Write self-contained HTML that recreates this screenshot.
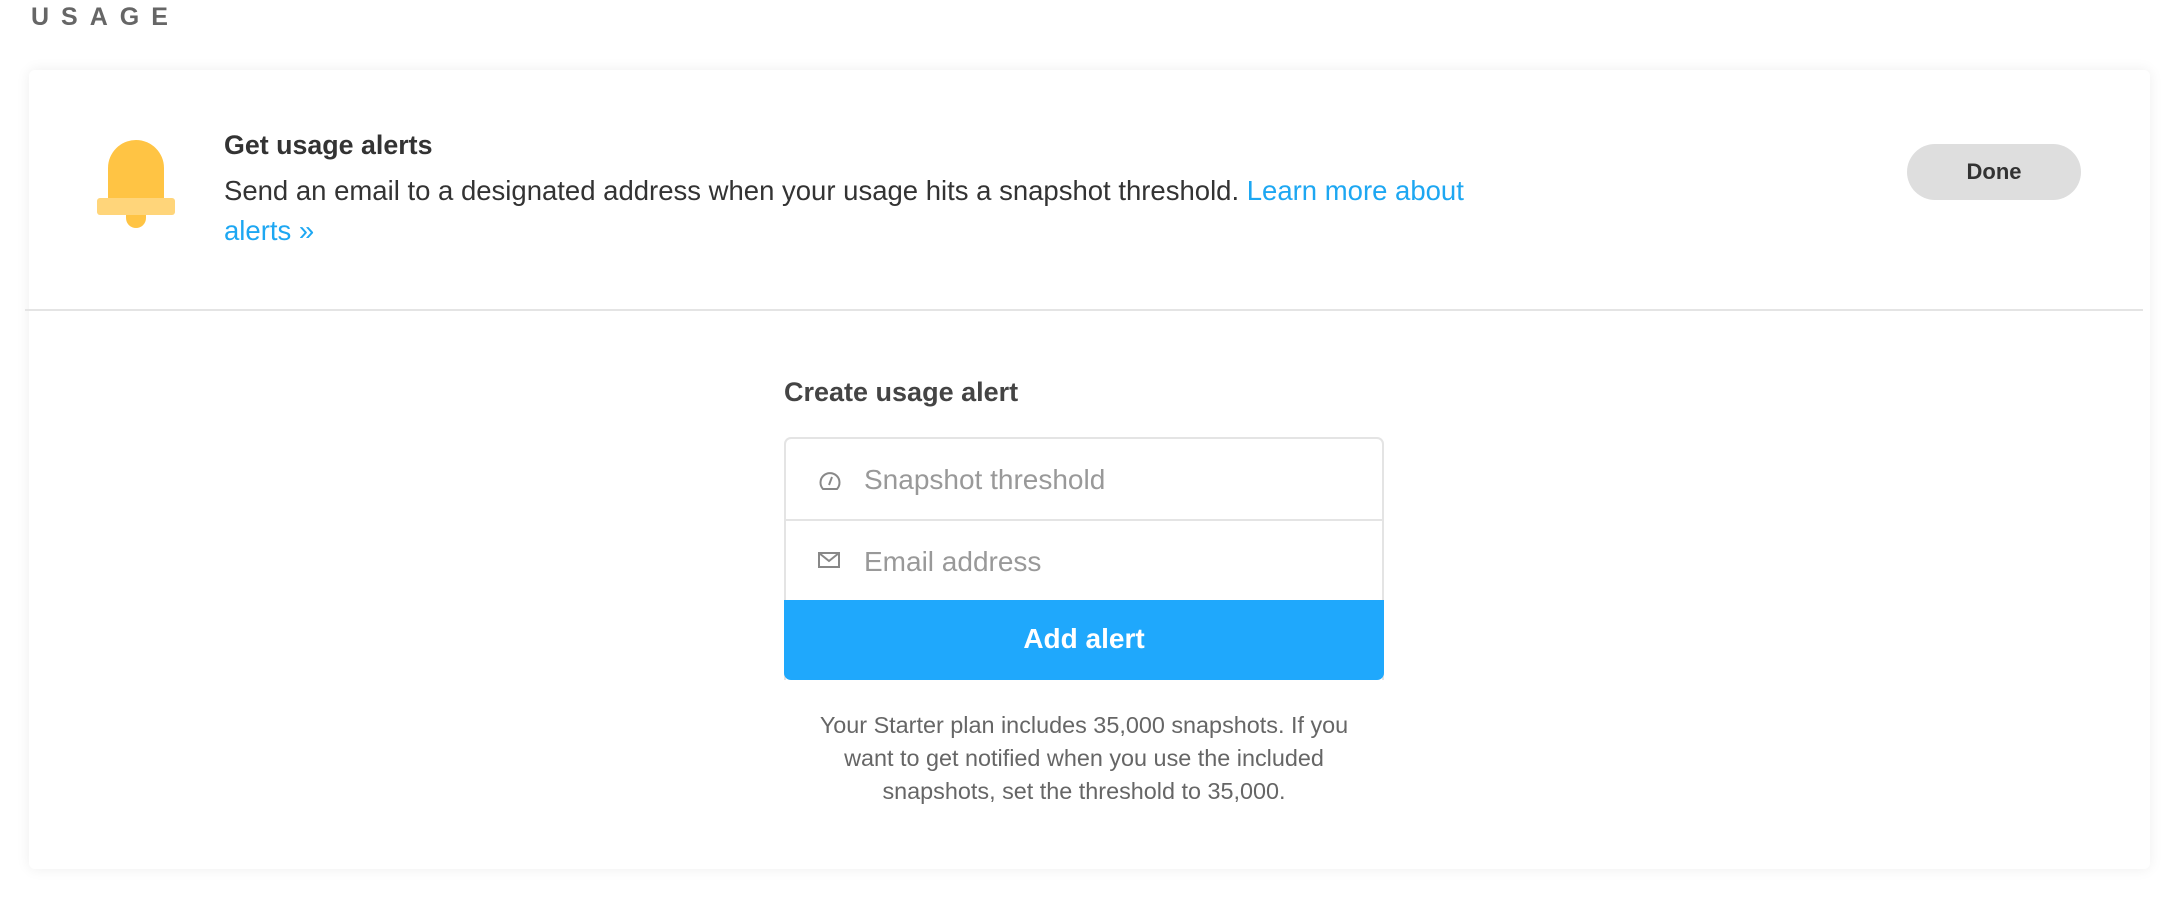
<!DOCTYPE html>
<html><head><meta charset="utf-8"><style>
*{margin:0;padding:0;box-sizing:border-box}
body{width:2180px;height:898px;background:#fff;font-family:"Liberation Sans",sans-serif;position:relative;overflow:hidden;color:#333}
.usage{position:absolute;left:31px;top:3px;font-size:25px;font-weight:bold;letter-spacing:12px;color:#666}
.card{position:absolute;left:29px;top:70px;width:2121px;height:799px;background:#fff;border-radius:6px;box-shadow:0 0 14px rgba(0,0,0,0.07)}
.div{position:absolute;left:25px;top:309px;width:2118px;height:2px;background:#e4e4e4}
.bell{position:absolute}
.t1{position:absolute;left:224px;top:130px;font-size:26.8px;font-weight:bold;color:#333}
.t2{position:absolute;left:224px;top:171px;width:1275px;font-size:27.5px;line-height:40px;color:#333}
.t2 a{color:#1da7f2;text-decoration:none}
.done{position:absolute;left:1907px;top:144px;width:174px;height:56px;border-radius:28px;background:#dedede;font-size:22px;font-weight:bold;color:#333;text-align:center;line-height:56px}
.h{position:absolute;left:784px;top:377px;font-size:27px;font-weight:bold;color:#444}
.box{position:absolute;left:784px;top:437px;width:600px;height:243px;border:2px solid #e4e4e4;border-bottom:none;border-radius:7px 7px 0 0}
.row{position:absolute;left:0;width:100%;height:82px;font-size:28px;color:#999;line-height:82px;padding-left:78px}
.row svg{position:absolute;left:32px;top:30px}
.btn{position:absolute;left:784px;top:600px;width:600px;height:80px;background:#1fa8fc;color:#fff;font-size:28px;font-weight:bold;text-align:center;line-height:78px;border-radius:0 0 7px 7px}
.note{position:absolute;left:794px;top:709px;width:580px;text-align:center;font-size:23.4px;line-height:33px;color:#666}
</style></head><body>
<div class="usage">USAGE</div>
<div class="card"></div>
<svg class="bell" style="left:97px;top:140px" width="78" height="88" viewBox="0 0 78 88">
<path d="M11 60 V28 A28 28 0 0 1 67 28 V60 Z" fill="#ffc444"/>
<rect x="0" y="58" width="78" height="17" rx="3" fill="#ffd57a"/>
<path d="M29 75 h20 v3 a10 10 0 0 1 -20 0 z" fill="#ffc444"/>
</svg>
<div class="t1">Get usage alerts</div>
<div class="t2">Send an email to a designated address when your usage hits a snapshot threshold. <a>Learn more about alerts »</a></div>
<div class="done">Done</div>
<div class="div"></div>
<div class="h">Create usage alert</div>
<div class="box">
<div class="row" style="top:0"><svg width="24" height="22" viewBox="0 0 24 22" fill="none" stroke="#888" stroke-width="2"><path d="M5 20 A9.5 9.5 0 1 1 19 20 Z"/><path d="M11 16 L14 8"/></svg>Snapshot threshold</div>
<div style="position:absolute;left:0;top:80px;width:100%;height:2px;background:#e4e4e4"></div>
<div class="row" style="top:82px"><svg width="22" height="18" viewBox="0 0 22 18" fill="none" stroke="#888" stroke-width="2"><rect x="1" y="2" width="20" height="14"/><path d="M1 2 L11 10 L21 2"/></svg>Email address</div>
</div>
<div class="btn">Add alert</div>
<div class="note">Your Starter plan includes 35,000 snapshots. If you want to get notified when you use the included snapshots, set the threshold to 35,000.</div>
</body></html>
